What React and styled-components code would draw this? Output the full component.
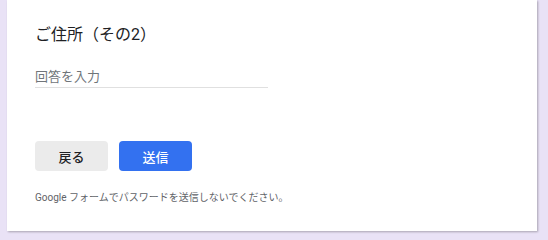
import React from "react";
import styled, { createGlobalStyle } from "styled-components";

const Global = createGlobalStyle`
  html, body { margin: 0; padding: 0; }
  body {
    background: #e9e2f6;
    font-family: Roboto, "Noto Sans CJK JP", sans-serif;
    color: #202124;
  }
`;

const Page = styled.div`
  width: 548px;
  height: 240px;
  box-sizing: border-box;
  padding: 0 11px 0 7px;
  overflow: hidden;
`;

const Card = styled.div`
  background: #fff;
  height: 231px;
  box-sizing: border-box;
  padding: 24px 28px 0 28px;
  box-shadow: 1px 1px 2px rgba(0, 0, 0, 0.28);
  display: flex;
  flex-direction: column;
`;

const Title = styled.div`
  font-size: 16px;
  line-height: 22px;
  font-weight: 400;
  color: #202124;
`;

const Field = styled.div`
  margin-top: 20px;
  width: 233px;
  border-bottom: 1px solid #e0e0e0;
  padding-bottom: 1px;
`;

const Placeholder = styled.span`
  font-size: 13px;
  line-height: 18px;
  color: #70757a;
`;

const Buttons = styled.div`
  display: flex;
  gap: 11px;
  margin-top: 53px;
`;

const Button = styled.button`
  width: 73px;
  height: 30px;
  border: none;
  border-radius: 4px;
  font-family: Roboto, "Noto Sans CJK JP", sans-serif;
  font-size: 13px;
  font-weight: 500;
  background: ${(p) => (p.$primary ? "#3371f0" : "#ebebeb")};
  color: ${(p) => (p.$primary ? "#ffffff" : "#202124")};
  padding: 0;
  cursor: pointer;
`;

const Note = styled.div`
  margin-top: 20px;
  font-size: 10px;
  line-height: 14px;
  color: #5f6368;
`;

export default function App() {
  return (
    <>
      <Global />
      <Page>
        <Card>
          <Title>ご住所（その2）</Title>
          <Field>
            <Placeholder>回答を入力</Placeholder>
          </Field>
          <Buttons>
            <Button>戻る</Button>
            <Button $primary>送信</Button>
          </Buttons>
          <Note>Google フォームでパスワードを送信しないでください。</Note>
        </Card>
      </Page>
    </>
  );
}
